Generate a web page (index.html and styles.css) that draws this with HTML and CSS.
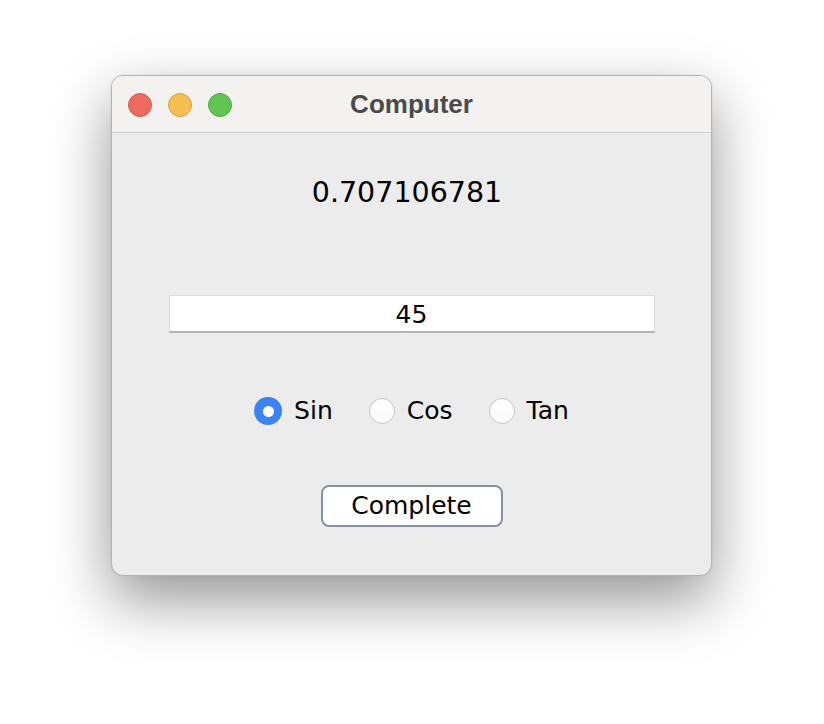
FILE: index.html
```html
<!DOCTYPE html>
<html>
<head>
<meta charset="utf-8">
<link rel="stylesheet" href="styles.css">
</head>
<body>
<div class="window">
  <div class="titlebar">
    <div class="lights">
      <span class="light red"></span>
      <span class="light yellow"></span>
      <span class="light green"></span>
    </div>
    <div class="title">Computer</div>
    <div></div>
  </div>
  <div class="content">
    <div class="result">0.707106781</div>
    <div class="field">45</div>
    <div class="radios">
      <div class="radio-item"><span class="radio checked"></span><span class="radio-label">Sin</span></div>
      <div class="radio-item"><span class="radio"></span><span class="radio-label">Cos</span></div>
      <div class="radio-item"><span class="radio"></span><span class="radio-label">Tan</span></div>
    </div>
    <div class="button">Complete</div>
  </div>
</div>
</body>
</html>
```

FILE: styles.css
```css
html, body {
  margin: 0;
  padding: 0;
  background: #ffffff;
}
body {
  box-sizing: border-box;
  min-height: 724px;
  width: 824px;
  padding: 75px 0 0 111px;
  font-family: "DejaVu Sans", sans-serif;
}
.window {
  width: 599px;
  height: 499px;
  border: 1px solid #b3b3b3;
  border-radius: 12px;
  background: #ececec;
  box-shadow: 0 24px 60px rgba(0,0,0,0.42), 0 0 3px rgba(0,0,0,0.08);
  overflow: hidden;
  display: flex;
  flex-direction: column;
}
.titlebar {
  height: 56px;
  background: #f3f2f1;
  border-bottom: 1px solid #d2d2d2;
  display: grid;
  grid-template-columns: 1fr auto 1fr;
  align-items: center;
}
.lights {
  display: flex;
  gap: 16px;
  padding-left: 16px;
  padding-top: 1px;
}
.light {
  width: 22px;
  height: 22px;
  border-radius: 50%;
  display: block;
}
.red { background: #ee6a5f; border: 1px solid #d5574c; }
.yellow { background: #f6be4f; border: 1px solid #d9a141; }
.green { background: #61c554; border: 1px solid #51a83f; }
.title {
  font-family: "Liberation Sans", Arial, sans-serif;
  font-weight: bold;
  font-size: 26px;
  color: #4b4b4b;
}
.content {
  display: flex;
  flex-direction: column;
  align-items: center;
  padding-top: 43px;
}
.result {
  font-size: 28.5px;
  line-height: 34px;
  color: #000;
  padding-right: 9px;
}
.field {
  margin-top: 85px;
  width: 484px;
  height: 35px;
  background: #fff;
  border: 1px solid #d9d9d9;
  border-bottom: 2px solid #b3b3b3;
  font-size: 25px;
  line-height: 38px;
  text-align: center;
  color: #000;
}
.radios {
  margin-top: 64px;
  display: flex;
  align-items: center;
  gap: 36px;
}
.radio-item {
  display: flex;
  align-items: center;
  gap: 12px;
}
.radio {
  width: 26px;
  height: 26px;
  border-radius: 50%;
  box-sizing: border-box;
  border: 1px solid #c9c9c9;
  background: linear-gradient(#ffffff, #fafafa);
  box-shadow: inset 0 1px 1px rgba(0,0,0,0.04);
  display: flex;
  align-items: center;
  justify-content: center;
}
.radio.checked {
  border: none;
  background: #3b84f6;
  width: 28px;
  height: 28px;
}
.radio.checked::after {
  content: "";
  width: 11px;
  height: 11px;
  border-radius: 50%;
  background: #fff;
}
.radio-label {
  font-size: 25px;
  line-height: 28px;
  color: #000;
}
.button {
  margin-top: 60px;
  width: 178px;
  height: 38px;
  border: 2.5px solid #8592a6;
  border-radius: 8px;
  background: #fff;
  font-size: 25px;
  line-height: 38px;
  text-align: center;
  color: #000;
}
```
